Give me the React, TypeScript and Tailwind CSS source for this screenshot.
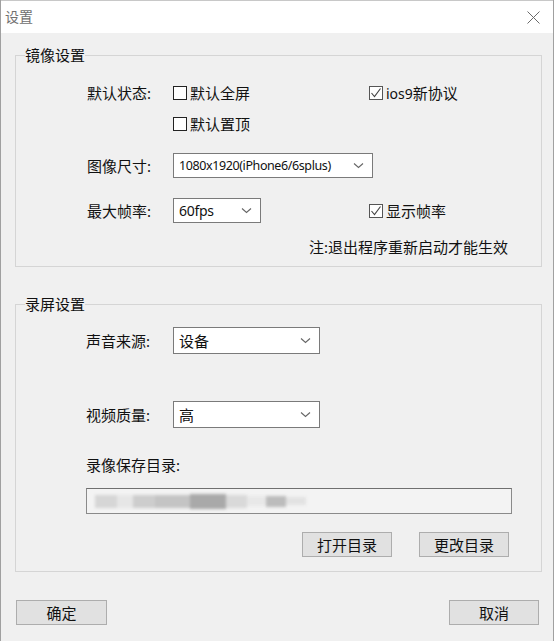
import React from "react";

const Check = ({ checked, label }: { checked?: boolean; label: React.ReactNode }) => (
  <div className="flex items-center">
    <div
      className={`w-[14px] h-[14px] border bg-white flex items-center justify-center ${
        checked ? "border-[#555]" : "border-[#222]"
      }`}
    >
      {checked && (
        <svg width="12" height="12" viewBox="0 0 12 12">
          <polyline points="1.5,6 4.5,9.5 10.5,1.5" fill="none" stroke="#444" strokeWidth="1.1" />
        </svg>
      )}
    </div>
    <span className="ml-[3px]">{label}</span>
  </div>
);

const Chevron = () => (
  <svg width="11" height="7" viewBox="0 0 11 7">
    <polyline points="1,1.5 5.5,5.5 10,1.5" fill="none" stroke="#666" strokeWidth="1.1" />
  </svg>
);

const Select = ({ text, w, h, tc }: { text: string; w: string; h: string; tc?: string }) => (
  <div className={`${w} ${h} bg-white border border-[#7a7a7a] flex items-center justify-between pl-[5px] pr-[8px]`}>
    <span className={`whitespace-nowrap ${tc ?? ""}`}>{text}</span>
    <Chevron />
  </div>
);

const Btn = ({ label, w }: { label: string; w: string }) => (
  <div className={`${w} h-[25px] bg-[#e1e1e1] border border-[#adadad] flex items-center justify-center`}>
    {label}
  </div>
);

export default function App() {
  return (
    <div className="w-[554px] h-[641px] bg-[#f0f0f0] border-l border-r border-[#a0a0a0] text-[15px] leading-[18px] text-[#111] font-['Noto_Sans','Noto_Sans_CJK_SC',sans-serif] overflow-hidden">
      {/* title bar */}
      <div className="h-[33px] bg-white flex items-center justify-between pl-[4px] pr-[13px] border-t border-[#c8c8c8]">
        <span className="text-[#707070] text-[14px]">设置</span>
        <svg width="13" height="13" viewBox="0 0 13 13">
          <line x1="0.5" y1="0.5" x2="12.5" y2="12.5" stroke="#6a6a6a" strokeWidth="1" />
          <line x1="12.5" y1="0.5" x2="0.5" y2="12.5" stroke="#6a6a6a" strokeWidth="1" />
        </svg>
      </div>

      <div className="pl-[14px] pr-[11px]">
        {/* group 1 */}
        <fieldset className="min-w-0 mt-[14px] border border-[#d5d5d5] pb-[10px]">
          <legend className="ml-[9px] leading-[16px]">镜像设置</legend>
          <div className="pl-[71px] pr-[33px] flex flex-col">
            <div className="mt-[20px] h-[20px] flex items-center">
              <span className="w-[86px]">默认状态:</span>
              <div className="w-[196px]">
                <Check label="默认全屏" />
              </div>
              <Check
                checked
                label={
                  <>
                    <span className="text-[14px]">ios9</span>新协议
                  </>
                }
              />
            </div>
            <div className="mt-[11px] h-[20px] flex items-center">
              <span className="w-[86px]"></span>
              <Check label="默认置顶" />
            </div>
            <div className="mt-[19px] h-[25px] flex items-center">
              <span className="w-[86px]">图像尺寸:</span>
              <Select
                text="1080x1920(iPhone6/6splus)"
                w="w-[200px]"
                h="h-[25px]"
                tc="text-[12.5px] tracking-[-0.4px]"
              />
            </div>
            <div className="mt-[20px] h-[25px] flex items-center">
              <span className="w-[86px]">最大帧率:</span>
              <Select text="60fps" w="w-[88px]" h="h-[25px]" tc="text-[14px] tracking-[-0.3px]" />
              <div className="ml-[108px]">
                <Check checked label="显示帧率" />
              </div>
            </div>
            <div className="mt-[15px] h-[18px] flex items-center justify-end">
              <span>注:退出程序重新启动才能生效</span>
            </div>
          </div>
        </fieldset>

        {/* group 2 */}
        <fieldset className="min-w-0 mt-[29px] border border-[#d5d5d5] pb-[14px]">
          <legend className="ml-[9px] leading-[16px]">录屏设置</legend>
          <div className="pl-[70px] flex flex-col">
            <div className="mt-[15px] h-[27px] flex items-center">
              <span className="w-[87px]">声音来源:</span>
              <Select text="设备" w="w-[147px]" h="h-[27px]" />
            </div>
            <div className="mt-[47px] h-[27px] flex items-center">
              <span className="w-[87px]">视频质量:</span>
              <Select text="高" w="w-[147px]" h="h-[27px]" />
            </div>
            <div className="mt-[28px] h-[18px] flex items-center">
              <span>录像保存目录:</span>
            </div>
            <div className="mt-[14px] w-[426px] h-[26px] border border-[#8a8a8a] border-t-[#6f6f6f] bg-[#f3f3f3] flex items-center">
              <div className="flex items-center blur-[1.5px] pl-[8px]">
                <div className="w-[22px] h-[13px] bg-[#d6d6d6]" />
                <div className="w-[16px] h-[13px] bg-[#e6e6e6]" />
                <div className="w-[22px] h-[13px] bg-[#cdcdcd]" />
                <div className="w-[35px] h-[13px] bg-[#c4c4c4]" />
                <div className="w-[36px] h-[15px] bg-[#a9a9a9]" />
                <div className="w-[21px] h-[13px] bg-[#d9d9d9]" />
                <div className="w-[19px] h-[10px] bg-[#e8e8e8]" />
                <div className="w-[20px] h-[11px] bg-[#bcbcbc]" />
                <div className="w-[20px] h-[8px] bg-[#e2e2e2]" />
              </div>
            </div>
            <div className="mt-[18px] h-[25px] flex items-center justify-end gap-[27px] pr-[32px]">
              <Btn label="打开目录" w="w-[90px]" />
              <Btn label="更改目录" w="w-[90px]" />
            </div>
          </div>
        </fieldset>

        {/* bottom buttons */}
        <div className="mt-[28px] flex justify-between pl-[1px] pr-[3px]">
          <Btn label="确定" w="w-[91px]" />
          <Btn label="取消" w="w-[90px]" />
        </div>
      </div>
    </div>
  );
}
